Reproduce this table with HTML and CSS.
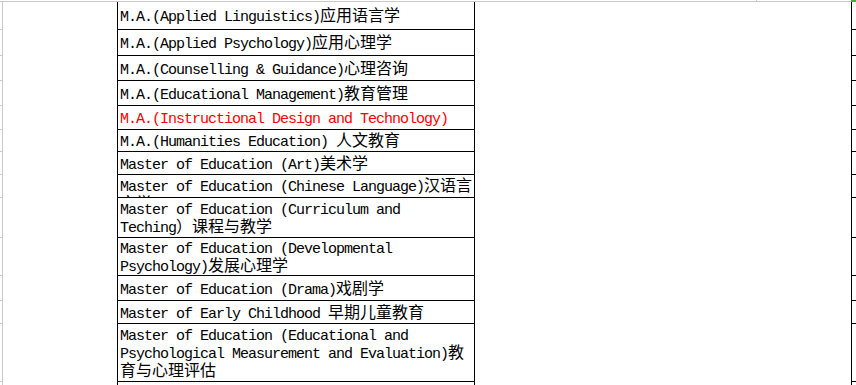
FILE: index.html
```html
<!DOCTYPE html>
<html lang="zh">
<head>
<meta charset="utf-8">
<title>Programmes</title>
<link rel="stylesheet" href="styles.css">
</head>
<body>
<div class="sheet">
  <i class="hd"></i><i class="hg"></i>

  <i class="tl"></i><i class="gl"></i><i class="sp"></i><div class="cell"><span>M.A.(Applied Linguistics)<span class="zh">应用语言学</span></span></div><i class="sp"></i><i class="bl"></i><i class="tr"></i>
  <i class="tl"></i><i class="gl"></i><i class="sp"></i><div class="cell"><span>M.A.(Applied Psychology)<span class="zh">应用心理学</span></span></div><i class="sp"></i><i class="bl"></i><i class="tr"></i>
  <i class="tl"></i><i class="gl"></i><i class="sp"></i><div class="cell"><span>M.A.(Counselling &amp; Guidance)<span class="zh">心理咨询</span></span></div><i class="sp"></i><i class="bl"></i><i class="tr"></i>
  <i class="tl"></i><i class="gl"></i><i class="sp"></i><div class="cell"><span>M.A.(Educational Management)<span class="zh">教育管理</span></span></div><i class="sp"></i><i class="bl"></i><i class="tr"></i>
  <i class="tl"></i><i class="gl"></i><i class="sp"></i><div class="cell red"><span>M.A.(Instructional Design and Technology)</span></div><i class="sp"></i><i class="bl"></i><i class="tr"></i>
  <i class="tl"></i><i class="gl"></i><i class="sp"></i><div class="cell"><span>M.A.(Humanities Education) <span class="zh">人文教育</span></span></div><i class="sp"></i><i class="bl"></i><i class="tr"></i>
  <i class="tl"></i><i class="gl"></i><i class="sp"></i><div class="cell"><span>Master of Education (Art)<span class="zh">美术学</span></span></div><i class="sp"></i><i class="bl"></i><i class="tr"></i>
  <i class="tl"></i><i class="gl"></i><i class="sp"></i><div class="cell top"><span>Master of Education (Chinese Language)<span class="zh">汉语言文学</span></span></div><i class="sp"></i><i class="bl"></i><i class="tr"></i>
  <i class="tl"></i><i class="gl"></i><i class="sp"></i><div class="cell"><span>Master of Education (Curriculum and Teching<span class="zh">）课程与教学</span></span></div><i class="sp"></i><i class="bl"></i><i class="tr"></i>
  <i class="tl"></i><i class="gl"></i><i class="sp"></i><div class="cell"><span>Master of Education (Developmental Psychology)<span class="zh">发展心理学</span></span></div><i class="sp"></i><i class="bl"></i><i class="tr"></i>
  <i class="tl"></i><i class="gl"></i><i class="sp"></i><div class="cell"><span>Master of Education (Drama)<span class="zh">戏剧学</span></span></div><i class="sp"></i><i class="bl"></i><i class="tr"></i>
  <i class="tl"></i><i class="gl"></i><i class="sp"></i><div class="cell"><span>Master of Early Childhood <span class="zh">早期儿童教育</span></span></div><i class="sp"></i><i class="bl"></i><i class="tr"></i>
  <i class="tl"></i><i class="gl"></i><i class="sp"></i><div class="cell"><span>Master of Education (Educational and Psychological Measurement and Evaluation)<span class="zh">教育与心理评估</span></span></div><i class="sp"></i><i class="bl"></i><i class="tr"></i>
  <i class="tl"></i><i class="gl"></i><i class="sp"></i><div class="cell"></div><i class="sp"></i><i class="bl"></i><i class="tr"></i>
</div>
</body>
</html>
```
FILE: styles.css
```css
html, body {
  margin: 0;
  padding: 0;
  background: #fff;
}

.sheet {
  width: 856px;
  height: 385px;
  overflow: hidden;
  display: grid;
  grid-template-columns: 2px 1px 114px 358px 376px 1px 4px;
  grid-template-rows: 2px 28px 26px 25px 25px 24px 22px 23px 23px 40px 38px 25px 23px 58px 40px;
  font-family: "Liberation Mono", "Noto Sans CJK SC", monospace;
  font-size: 15px;
  letter-spacing: -1px;
  line-height: 17px;
  color: #000;
}

.sheet i {
  display: block;
  min-width: 0;
  min-height: 0;
}

.hd {
  grid-column: 1 / 6;
  border-bottom: 1px solid #c9c9c9;
  background: linear-gradient(#c9c9c9, #c9c9c9) no-repeat 756px 0 / 1px 1px;
}

.hg {
  grid-column: 6 / 8;
  background: #4caf3b;
}

.tl {
  border-bottom: 1px solid #c9c9c9;
}

.gl {
  background: #c9c9c9;
}

.bl {
  background: #000;
}

.tr {
  border-bottom: 1px solid #000;
}

.cell {
  border-left: 1px solid #000;
  border-right: 1px solid #000;
  border-bottom: 1px solid #000;
  padding: 3px 0 0 2px;
  display: flex;
  align-items: center;
  overflow: hidden;
  min-width: 0;
  min-height: 0;
}

.cell.top {
  align-items: flex-start;
  padding-top: 3px;
}

.red {
  color: #ff0000;
}

.zh {
  font-family: "Noto Sans CJK SC", sans-serif;
  font-size: 16px;
  line-height: 12px;
  letter-spacing: 0;
  text-spacing-trim: space-all;
}
```
